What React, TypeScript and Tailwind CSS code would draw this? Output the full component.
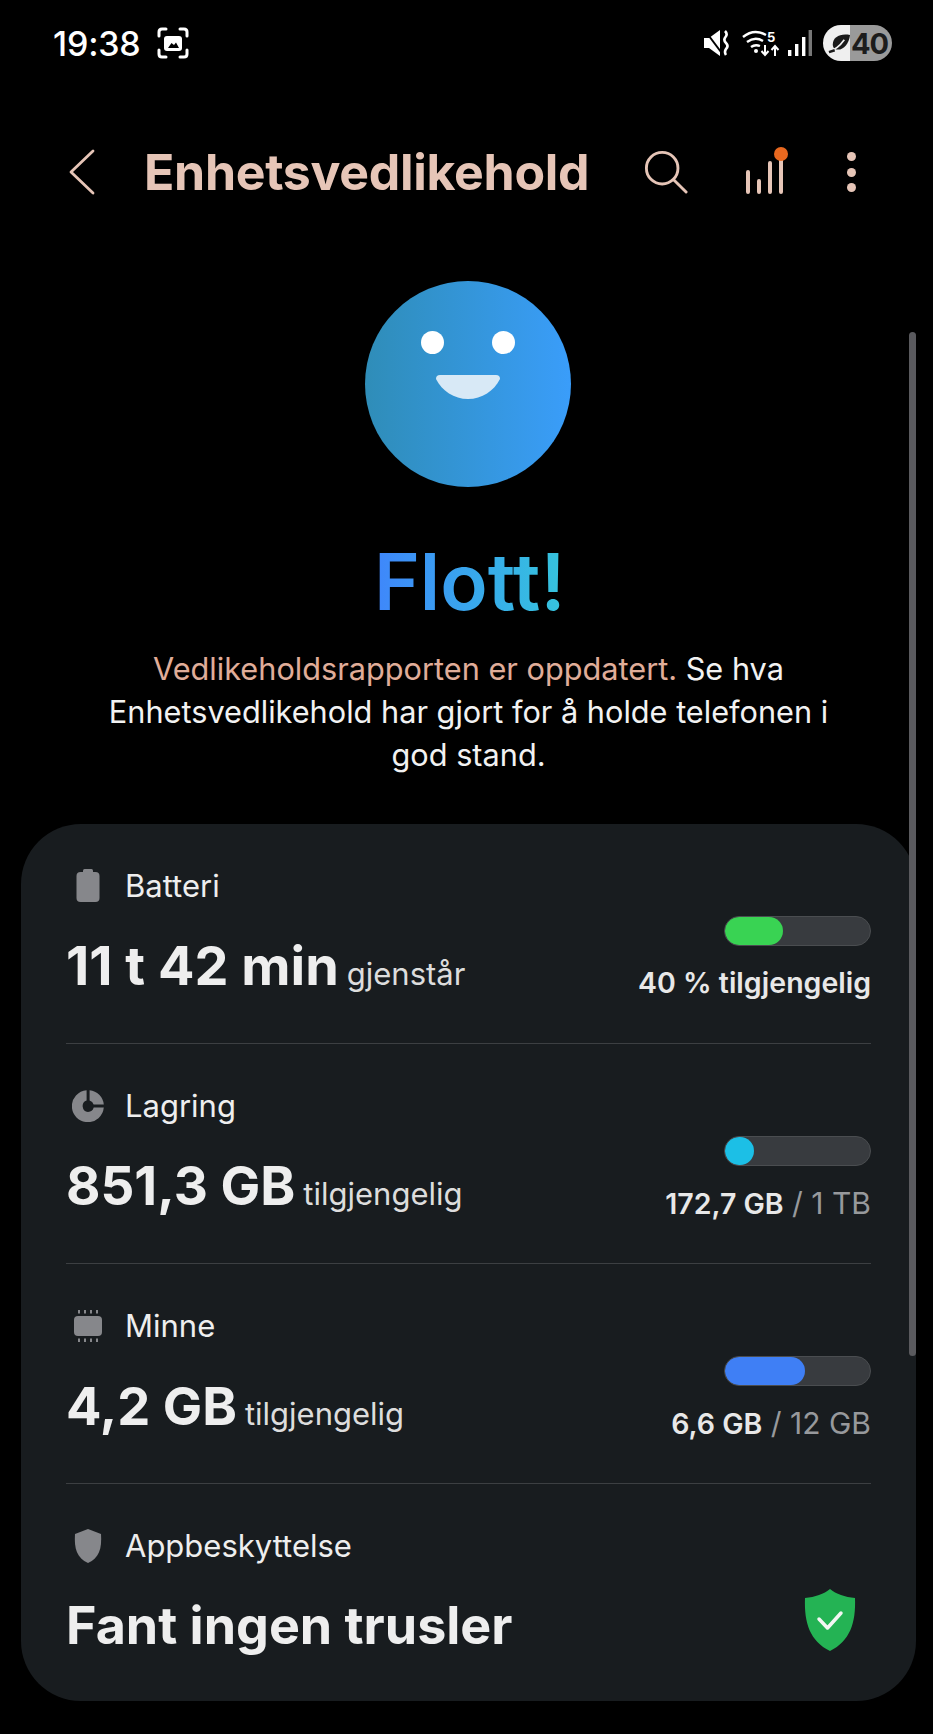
const font = { fontFamily: 'Inter, "Noto Sans", sans-serif' };

const BatteryIcon = () => (
  <svg width="24" height="34" viewBox="0 0 24 34" fill="#86878b">
    <rect x="7" y="0" width="10" height="5" rx="1.5" />
    <rect x="0.5" y="3" width="23" height="30" rx="4" />
  </svg>
);

const StorageIcon = () => (
  <svg width="32" height="32" viewBox="0 0 32 32" fill="#86878b">
    <path d="M14.6 0.2 V10.4 A6 6 0 0 0 16 22 A6 6 0 0 0 21.7 17.6 H31.8 A16 16 0 1 1 14.6 0.2 Z" />
    <path d="M17.6 0.2 A16 16 0 0 1 31.8 14.6 H21.6 A6 6 0 0 0 17.6 10.4 Z" />
  </svg>
);

const MemoryIcon = () => (
  <svg width="30" height="32" viewBox="0 0 30 32" fill="#86878b">
    <rect x="1" y="6" width="28" height="20" rx="4" />
    <g>
      <rect x="5" y="0" width="2" height="3.5" />
      <rect x="11" y="0" width="2" height="3.5" />
      <rect x="17" y="0" width="2" height="3.5" />
      <rect x="23" y="0" width="2" height="3.5" />
      <rect x="5" y="28.5" width="2" height="3.5" />
      <rect x="11" y="28.5" width="2" height="3.5" />
      <rect x="17" y="28.5" width="2" height="3.5" />
      <rect x="23" y="28.5" width="2" height="3.5" />
    </g>
  </svg>
);

const ShieldIcon = () => (
  <svg width="28" height="34" viewBox="0 0 28 34" fill="#86878b">
    <path d="M14 0 L27 5 C28 20 25 29 14 34 C3 29 0 20 1 5 Z" />
  </svg>
);

const GreenShield = () => (
  <svg width="52" height="62" viewBox="0 0 52 62">
    <path d="M26 0 C32 5 41 8 51 9 C52 34 46 52 26 62 C6 52 0 34 1 9 C11 8 20 5 26 0 Z" fill="#24b354" />
    <path d="M15 30 L23.5 39 L37 24" fill="none" stroke="#f3f6f3" strokeWidth="3.5" strokeLinecap="round" strokeLinejoin="round" />
  </svg>
);

const StatusBar = () => (
  <div className="flex items-center h-[86px] pl-[53px] pr-[41px] text-white">
    <span className="text-[34px] font-medium tracking-[-0.2px]">19:38</span>
    <svg className="ml-[16px]" width="32" height="32" viewBox="0 0 32 32" fill="none" stroke="#fff" strokeWidth="3" strokeLinecap="round">
      <path d="M2 9 V5 Q2 2 5 2 H9 M23 2 H27 Q30 2 30 5 V9 M2 23 V27 Q2 30 5 30 H9 M23 30 H27 Q30 30 30 27 V23" />
      <rect x="7" y="9" width="18" height="15" rx="3" fill="#fff" stroke="none" />
      <path d="M11 21 L14.5 16 L17 18 L19 15.5 L22 21 Z" fill="#000" stroke="none" />
    </svg>
    <div className="ml-auto flex items-center">
      <svg width="27" height="28" viewBox="0 0 27 28" fill="#fff">
        <path d="M1 9 H6 L17 1 V27 L6 19 H1 Z" />
        <path d="M3 3 L18 23" stroke="#000" strokeWidth="2" />
        <path d="M22 2 Q25 5 22.5 8 Q20 11 23 14 Q26 17 23 20 Q21 23 23 26" fill="none" stroke="#fff" strokeWidth="2.6" />
      </svg>
      <svg className="ml-[12px]" width="38" height="30" viewBox="0 0 38 30" fill="none" stroke="#fff" strokeWidth="2.4">
        <path d="M1 9 Q12 0 24 7" />
        <path d="M5 14 Q13 8 21 13" />
        <path d="M9 19 Q13 16 18 18" />
        <circle cx="14" cy="23" r="2" fill="#fff" stroke="none" />
        <text x="25" y="14" fontSize="13" fontWeight="700" fill="#fff" stroke="none">5</text>
        <path d="M23 17 V27 M19.5 23 L23 27 L26.5 23" strokeWidth="2" />
        <path d="M33 28 V18 M29.5 22 L33 18 L36.5 22" strokeWidth="2" />
      </svg>
      <svg className="ml-[8px]" width="24" height="26" viewBox="0 0 24 26">
        <rect x="0" y="20" width="3.4" height="6" fill="#fff" />
        <rect x="7" y="14" width="3.4" height="12" fill="#fff" />
        <rect x="14" y="7" width="3.4" height="19" fill="#fff" />
        <rect x="20.6" y="0" width="3.4" height="26" fill="#777" />
      </svg>
      <div className="ml-[11px] flex items-center w-[69px] h-[36px] rounded-full overflow-hidden bg-[linear-gradient(90deg,#efefef_39%,#9a9a9a_39%)]">
        <svg className="ml-[5px] shrink-0" width="23" height="23" viewBox="0 0 24 24" fill="#1a1a1a">
          <path d="M23 3 C13 1 5 5 5 13 C5 16 6 17 8 18 C15 20 22 13 23 3 Z" />
          <path d="M1 20 C6 19 12 15 17 8" stroke="#efefef" strokeWidth="1.8" fill="none" />
          <path d="M1 21 L7 19" stroke="#1a1a1a" strokeWidth="2.6" fill="none" />
        </svg>
        <span className="text-[#1c1c1c] text-[29px] font-bold tracking-[-1px] leading-none">40</span>
      </div>
    </div>
  </div>
);

const Header = () => (
  <div className="flex items-center h-[172px] text-[#e6c5b7]">
    <svg className="ml-[69px]" width="26" height="46" viewBox="0 0 26 46" fill="none" stroke="#e6c5b7" strokeWidth="2.8" strokeLinecap="round" strokeLinejoin="round">
      <path d="M24 2 L2 23 L24 44" />
    </svg>
    <h1 className="ml-[49px] text-[50px] font-bold leading-none tracking-[-0.3px]">Enhetsvedlikehold</h1>
    <svg className="ml-[55px]" width="44" height="44" viewBox="0 0 46 46" fill="none" stroke="#e6c5b7" strokeWidth="3" strokeLinecap="round">
      <circle cx="19" cy="19" r="16.5" />
      <path d="M31 31 L44 44" />
    </svg>
    <svg className="ml-[57px] -mt-[2px]" width="44" height="48" viewBox="0 0 44 48" fill="none" stroke="#e6c5b7" strokeWidth="4" strokeLinecap="round">
      <path d="M3 25 V45 M14 34 V45 M25 16 V45 M36 10 V45" />
      <circle cx="36" cy="7" r="7" fill="#e8681f" stroke="none" />
    </svg>
    <div className="ml-[58px] flex flex-col gap-[6.5px]">
      <span className="w-[9px] h-[9px] rounded-full bg-[#e6c5b7]" />
      <span className="w-[9px] h-[9px] rounded-full bg-[#e6c5b7]" />
      <span className="w-[9px] h-[9px] rounded-full bg-[#e6c5b7]" />
    </div>
  </div>
);

const Smiley = () => (
  <div className="ml-[365px] mt-[23px] w-[206px] h-[206px] rounded-full bg-gradient-to-r from-[#2f8db8] to-[#3a9dfa] relative">
    <span className="absolute left-[56px] top-[50px] w-[23px] h-[23px] rounded-full bg-white" />
    <span className="absolute left-[127px] top-[50px] w-[23px] h-[23px] rounded-full bg-white" />
    <svg className="absolute left-[71px] top-[94px]" width="64" height="24" viewBox="0 0 64 24">
      <path d="M4 0 H60 Q64 0 64 4 C58 16 46 24 32 24 C18 24 6 16 0 4 Q0 0 4 0 Z" fill="#d8e9f6" />
    </svg>
  </div>
);

type Row = {
  label: string;
  icon: React.ReactNode;
  value: string;
  valueClass: string;
  unit: string;
  fill: string;
  width: number;
  strong: string;
  weak?: string;
};

const rows: Row[] = [
  { label: 'Batteri', icon: <BatteryIcon />, value: '11 t 42 min', valueClass: 'text-[54px]', unit: 'gjenstår', fill: '#39d353', width: 40, strong: '40 % tilgjengelig' },
  { label: 'Lagring', icon: <StorageIcon />, value: '851,3 GB', valueClass: 'text-[53px]', unit: 'tilgjengelig', fill: '#1cbfe6', width: 20, strong: '172,7 GB', weak: ' / 1 TB' },
  { label: 'Minne', icon: <MemoryIcon />, value: '4,2 GB', valueClass: 'text-[52.5px]', unit: 'tilgjengelig', fill: '#3f7ff5', width: 55, strong: '6,6 GB', weak: ' / 12 GB' },
];

const Label = ({ icon, text }: { icon: React.ReactNode; text: string }) => (
  <div className="flex items-center h-[40px]">
    <div className="w-[44px] flex justify-center">{icon}</div>
    <span className="ml-[15px] text-[31px] text-[#eeeeee]">{text}</span>
  </div>
);

const StatRow = ({ row }: { row: Row }) => (
  <div className="flex justify-between h-[220px] border-b border-[#3c3f42] pt-[42px]">
    <div>
      <Label icon={row.icon} text={row.label} />
      <div className="mt-[30px] flex items-baseline h-[60px]">
        <span className={`${row.valueClass} font-bold leading-[60px] text-[#eeeeee]`}>{row.value}</span>
        <span className="ml-[8px] text-[31px] text-[#dddddd]">{row.unit}</span>
      </div>
    </div>
    <div className="flex flex-col items-end pt-[50px]">
      <div className="w-[147px] h-[30px] rounded-full bg-[#383b3f] border border-[#4a4d50] overflow-hidden">
        <div className="h-full rounded-full" style={{ width: `${row.width}%`, backgroundColor: row.fill }} />
      </div>
      <div className="mt-[19px] leading-[36px] whitespace-pre">
        <span className="text-[28.5px] font-semibold text-[#e8e8e8]">{row.strong}</span>
        {row.weak && <span className="text-[30px] text-[#97999c]">{row.weak}</span>}
      </div>
    </div>
  </div>
);

export default function App() {
  return (
    <div className="relative w-[933px] h-[1734px] bg-black overflow-hidden" style={font}>
      <StatusBar />
      <Header />
      <Smiley />
      <h2 className="mt-[47px] ml-[374px] w-fit text-[78px] leading-[96px] font-semibold bg-gradient-to-r from-[#3f86fb] to-[#36c4dc] bg-clip-text text-transparent">
        Flott!
      </h2>
      <p className="mt-[17px] pl-[4px] text-center text-[30.7px] leading-[43px] text-[#f2f2f2]">
        <span className="text-[#e0ad99]">Vedlikeholdsrapporten er oppdatert.</span> Se hva
        <br />
        Enhetsvedlikehold har gjort for å holde telefonen i
        <br />
        god stand.
      </p>
      <div className="mt-[48px] ml-[21px] w-[895px] h-[877px] rounded-[60px] bg-[#181c1f] px-[45px]">
        {rows.map((row) => (
          <StatRow key={row.label} row={row} />
        ))}
        <div className="flex justify-between pt-[42px]">
          <div>
            <Label icon={<ShieldIcon />} text="Appbeskyttelse" />
            <div className="mt-[30px] h-[60px] text-[52px] font-bold leading-[60px] text-[#eeeeee]">Fant ingen trusler</div>
          </div>
          <div className="pt-[63px] pr-[15px]">
            <GreenShield />
          </div>
        </div>
      </div>
      <div className="absolute left-[909px] top-[332px] w-[7px] h-[1024px] rounded-full bg-[#5a5a5e]" />
    </div>
  );
}
